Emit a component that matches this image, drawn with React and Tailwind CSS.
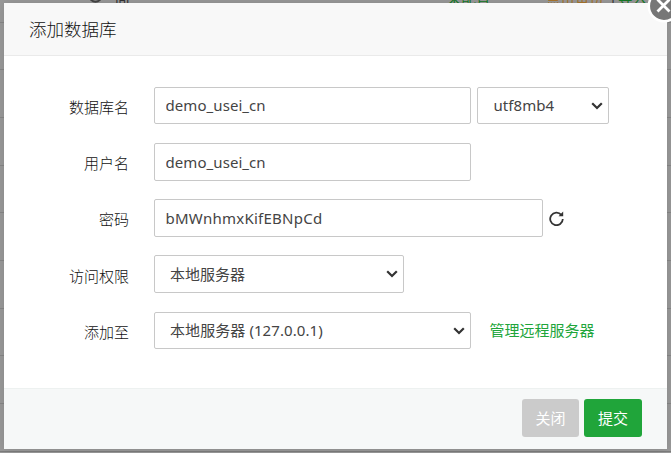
import React from 'react';

const FIELD =
  'block rounded-[2px] border border-[#c8c8c8] bg-white text-[15px] text-[#444] outline-none';

function Chevron() {
  return (
    <svg className="pointer-events-none absolute right-[6px] top-1/2 -mt-[4px] h-[8px] w-[12px]" viewBox="0 0 12 8" fill="none">
      <path d="M1.2 1.2 6 6l4.800-4.800" stroke="#333" strokeWidth="2.200" />
    </svg>
  );
}

function Select({ width, height, pad, options }) {
  return (
    <div className={`relative ${width} ${height}`}>
      <select className={`${FIELD} h-full w-full appearance-none ${pad}`}>
        {options.map((o) => (
          <option key={o}>{o}</option>
        ))}
      </select>
      <Chevron />
    </div>
  );
}

function Row({ label, className = '', labelPad = 'pt-[3px]', children }) {
  return (
    <div className={`flex items-center ${className}`}>
      <span className={`mr-[25px] w-[125px] text-right text-[15px] leading-[22px] font-light text-[#111] ${labelPad}`}>{label}</span>
      {children}
    </div>
  );
}

function Backdrop() {
  return (
    <div className="flex h-full flex-col bg-[#999]">
      <div className="relative h-[23px] shrink-0 border-b border-[#868686] text-[14.500px] leading-[20px] whitespace-nowrap">
        <svg className="absolute left-[88px] top-[-11px] h-[14px] w-[15px]" viewBox="0 0 15 14" fill="none">
          <circle cx="7.500" cy="7" r="5.800" stroke="#444" strokeWidth="2" />
        </svg>
        <span className="absolute left-[115px] top-[-11px] text-[#333]">间</span>
        <span className="absolute left-[447px] top-[-12px] text-[#137a25]">未配置</span>
        <span className="absolute left-[546px] top-[-12px] text-[#a9752c]">点击备份</span>
        <span className="absolute left-[609px] top-[-12px] text-[#333]">|</span>
        <span className="absolute left-[618px] top-[-12px] text-[#137a25]">导入</span>
      </div>
      <div className="h-[47px] shrink-0 border-b border-[#868686]" />
      <div className="h-[48px] shrink-0 border-b border-[#868686]" />
      <div className="h-[48px] shrink-0 border-b border-[#868686]" />
      <div className="h-[47px] shrink-0 border-b border-[#868686]" />
      <div className="h-[48px] shrink-0 border-b border-[#868686]" />
      <div className="h-[48px] shrink-0 border-b border-[#868686]" />
      <div className="h-[47px] shrink-0 border-b border-[#868686]" />
      <div className="h-[48px] shrink-0 border-b border-[#868686]" />
      <div className="h-[48px] shrink-0 border-b border-[#7c7c7c]" />
    </div>
  );
}

export default function App() {
  return (
    <div className="relative h-[453px] w-[671px] overflow-hidden font-['Noto_Sans','Noto_Sans_CJK_SC',sans-serif]">
      <Backdrop />
      <div className="absolute left-[4px] top-[3px] flex h-[446px] w-[663px] flex-col rounded-[2px] bg-white shadow-[0_0_10px_rgba(0,0,0,0.12)]">
        <div className="h-[53px] border-b border-[#eaeaea] bg-[#f8f8f8] pl-[25px] text-[17.500px] leading-[53px] font-light text-[#111]">
          添加数据库
        </div>
        <form className="flex-1 pt-[31px]">
          <Row label="数据库名">
            <input className={`${FIELD} h-[37px] w-[317px] pb-[1px] pl-[10.500px] tracking-[0.07px]`} readOnly value="demo_usei_cn" />
            <div className="w-[6px]" />
            <Select width="w-[132px]" height="h-[37px]" pad="pl-[15.500px] pb-[1px] tracking-[0.050px]" options={['utf8mb4']} />
          </Row>
          <Row label="用户名" className="mt-[19px]" labelPad="pt-[1px]">
            <input className={`${FIELD} h-[38px] w-[317px] pb-[1px] pl-[10.500px] tracking-[0.07px]`} readOnly value="demo_usei_cn" />
          </Row>
          <Row label="密码" className="mt-[18px]" labelPad="pt-[1px]">
            <input className={`${FIELD} h-[38px] w-[389px] pb-[1px] pl-[10.500px] tracking-[0.25px]`} readOnly value="bMWnhmxKifEBNpCd" />
            <svg className="ml-[6px] h-[15px] w-[15px]" viewBox="0 0 15 15" fill="none">
              <path d="M12.300 3.800A6.300 6.300 0 1 0 13.800 8" stroke="#333" strokeWidth="1.800" />
              <path d="M14.200 0.500v4.700H9.500z" fill="#333" />
            </svg>
          </Row>
          <Row label="访问权限" className="mt-[18px]" labelPad="pt-[3px]">
            <Select width="w-[250px]" height="h-[38px]" pad="pl-[15px] pt-[1px]" options={['本地服务器']} />
          </Row>
          <Row label="添加至" className="mt-[19px]">
            <Select width="w-[317px]" height="h-[37px]" pad="pl-[15px] pb-[1px] tracking-[0.080px]" options={['本地服务器 (127.0.0.1)']} />
            <a className="ml-[18.500px] pb-[2px] text-[15px] leading-[22px] text-[#20a53a]">管理远程服务器</a>
          </Row>
        </form>
        <div className="flex h-[61px] justify-end gap-[5px] border-t border-[#edf1f0] bg-[#f6f8f8] pr-[25px] pt-[10px] text-[15px]">
          <button className="h-[38px] w-[57px] rounded-[3px] bg-[#cbcbcb] text-white">关闭</button>
          <button className="h-[38px] w-[58px] rounded-[3px] bg-[#20a53a] text-white">提交</button>
        </div>
      </div>
      <svg className="absolute left-[647px] top-[-11px] h-[34px] w-[34px]" viewBox="0 0 34 34" fill="none">
        <circle cx="17" cy="17" r="15.200" fill="#777" stroke="#fff" strokeWidth="2.500" />
        <path d="m10.500 10.500 12 12M22.500 10.500 10.500 22.500" stroke="#fff" strokeWidth="2.800" />
      </svg>
    </div>
  );
}
